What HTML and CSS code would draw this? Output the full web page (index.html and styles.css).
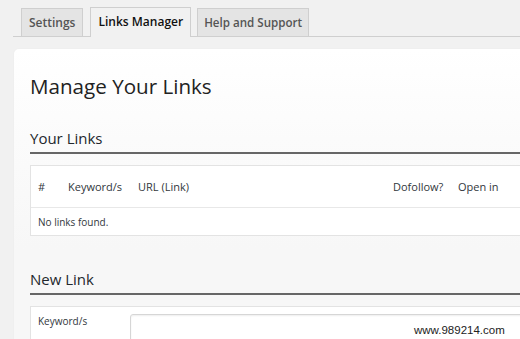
FILE: index.html
```html
<!DOCTYPE html>
<html>
<head>
<meta charset="utf-8">
<link rel="stylesheet" href="styles.css">
</head>
<body>
<div class="page">
  <nav class="tabs">
    <span class="tab">Settings</span>
    <span class="tab active">Links Manager</span>
    <span class="tab help">Help and Support</span>
  </nav>
  <main class="card">
    <h1 class="title">Manage Your Links</h1>
    <h2 class="section">Your Links</h2>
    <div class="table">
      <div class="row head">
        <span class="cell">#</span>
        <span class="cell">Keyword/s</span>
        <span class="cell">URL (Link)</span>
        <span class="cell">Dofollow?</span>
        <span class="cell">Open in</span>
      </div>
      <div class="row empty">
        <span class="cell">No links found.</span>
      </div>
    </div>
    <h2 class="section second">New Link</h2>
    <div class="form">
      <label class="label">Keyword/s</label>
      <div class="input"></div>
    </div>
  </main>
</div>
<div class="watermark">www.989214.com</div>
</body>
</html>
```
FILE: styles.css
```css
html, body {
  margin: 0;
  padding: 0;
}
body {
  background: #f1f1f1;
  font-family: "Open Sans", "DejaVu Sans", sans-serif;
  color: #32373c;
  overflow: hidden;
  width: 520px;
  height: 339px;
  position: relative;
}
.page {
  width: 600px;
}
.tabs {
  display: flex;
  align-items: flex-end;
  gap: 7px;
  margin-left: 13px;
  padding-left: 8px;
  padding-top: 7px;
  border-bottom: 1px solid #cfcfcf;
}
.tab {
  height: 27px;
  line-height: 27px;
  padding: 0 7px;
  border: 1px solid #cfcfcf;
  border-bottom: 0;
  background: #e4e4e4;
  font-size: 12px;
  font-weight: 600;
  color: #555;
}
.tab.active {
  background: #f1f1f1;
  color: #111;
  height: 29px;
  margin-bottom: -1px;
  line-height: 28px;
  margin-right: -1px;
}
.tab.help {
  font-size: 11.6px;
  padding: 0 6px;
}
.card {
  margin: 12px 0 0 14px;
  padding: 24px 0 0 16px;
  background: linear-gradient(to bottom, #ffffff 0, #fbfbfb 90px, #f7f7f7 200px);
  border-top-left-radius: 5px;
  box-shadow: 0 0 2px rgba(0, 0, 0, 0.04);
  height: 400px;
}
.title {
  margin: 0;
  font-size: 20.6px;
  font-weight: 400;
  line-height: 27px;
  color: #222;
}
.section {
  margin: 28px 0 0;
  padding-bottom: 4px;
  border-bottom: 2px solid #666;
  font-size: 15px;
  font-weight: 400;
  line-height: 20px;
  color: #23282d;
}
.section.second {
  margin-top: 33px;
}
.table {
  margin-top: 11px;
  background: #fff;
  border: 1px solid #e3e3e3;
}
.row {
  display: grid;
  grid-template-columns: 30px 70px 255px 65px 1fr;
  align-items: center;
}
.row.head {
  height: 41px;
  font-size: 11px;
  color: #32373c;
  border-bottom: 1px solid #e8e8e8;
}
.row.empty {
  display: flex;
  height: 27px;
  font-size: 10px;
}
.cell {
  padding-left: 7px;
}
.form {
  margin-top: 11px;
  background: #fff;
  border: 1px solid #e3e3e3;
  display: flex;
  padding: 7px 0 0 7px;
  height: 60px;
}
.label {
  width: 92px;
  font-size: 10px;
  line-height: 14px;
  color: #32373c;
}
.input {
  flex: 1;
  height: 30px;
  border: 1px solid #d6d6d6;
  border-radius: 3px;
  background: #fff;
  box-shadow: inset 0 1px 2px rgba(0, 0, 0, 0.07);
}
.watermark {
  position: absolute;
  left: 414px;
  top: 323px;
  font-family: "Liberation Sans", Arial, sans-serif;
  font-size: 11.5px;
  line-height: 14px;
  color: #222;
}
```
